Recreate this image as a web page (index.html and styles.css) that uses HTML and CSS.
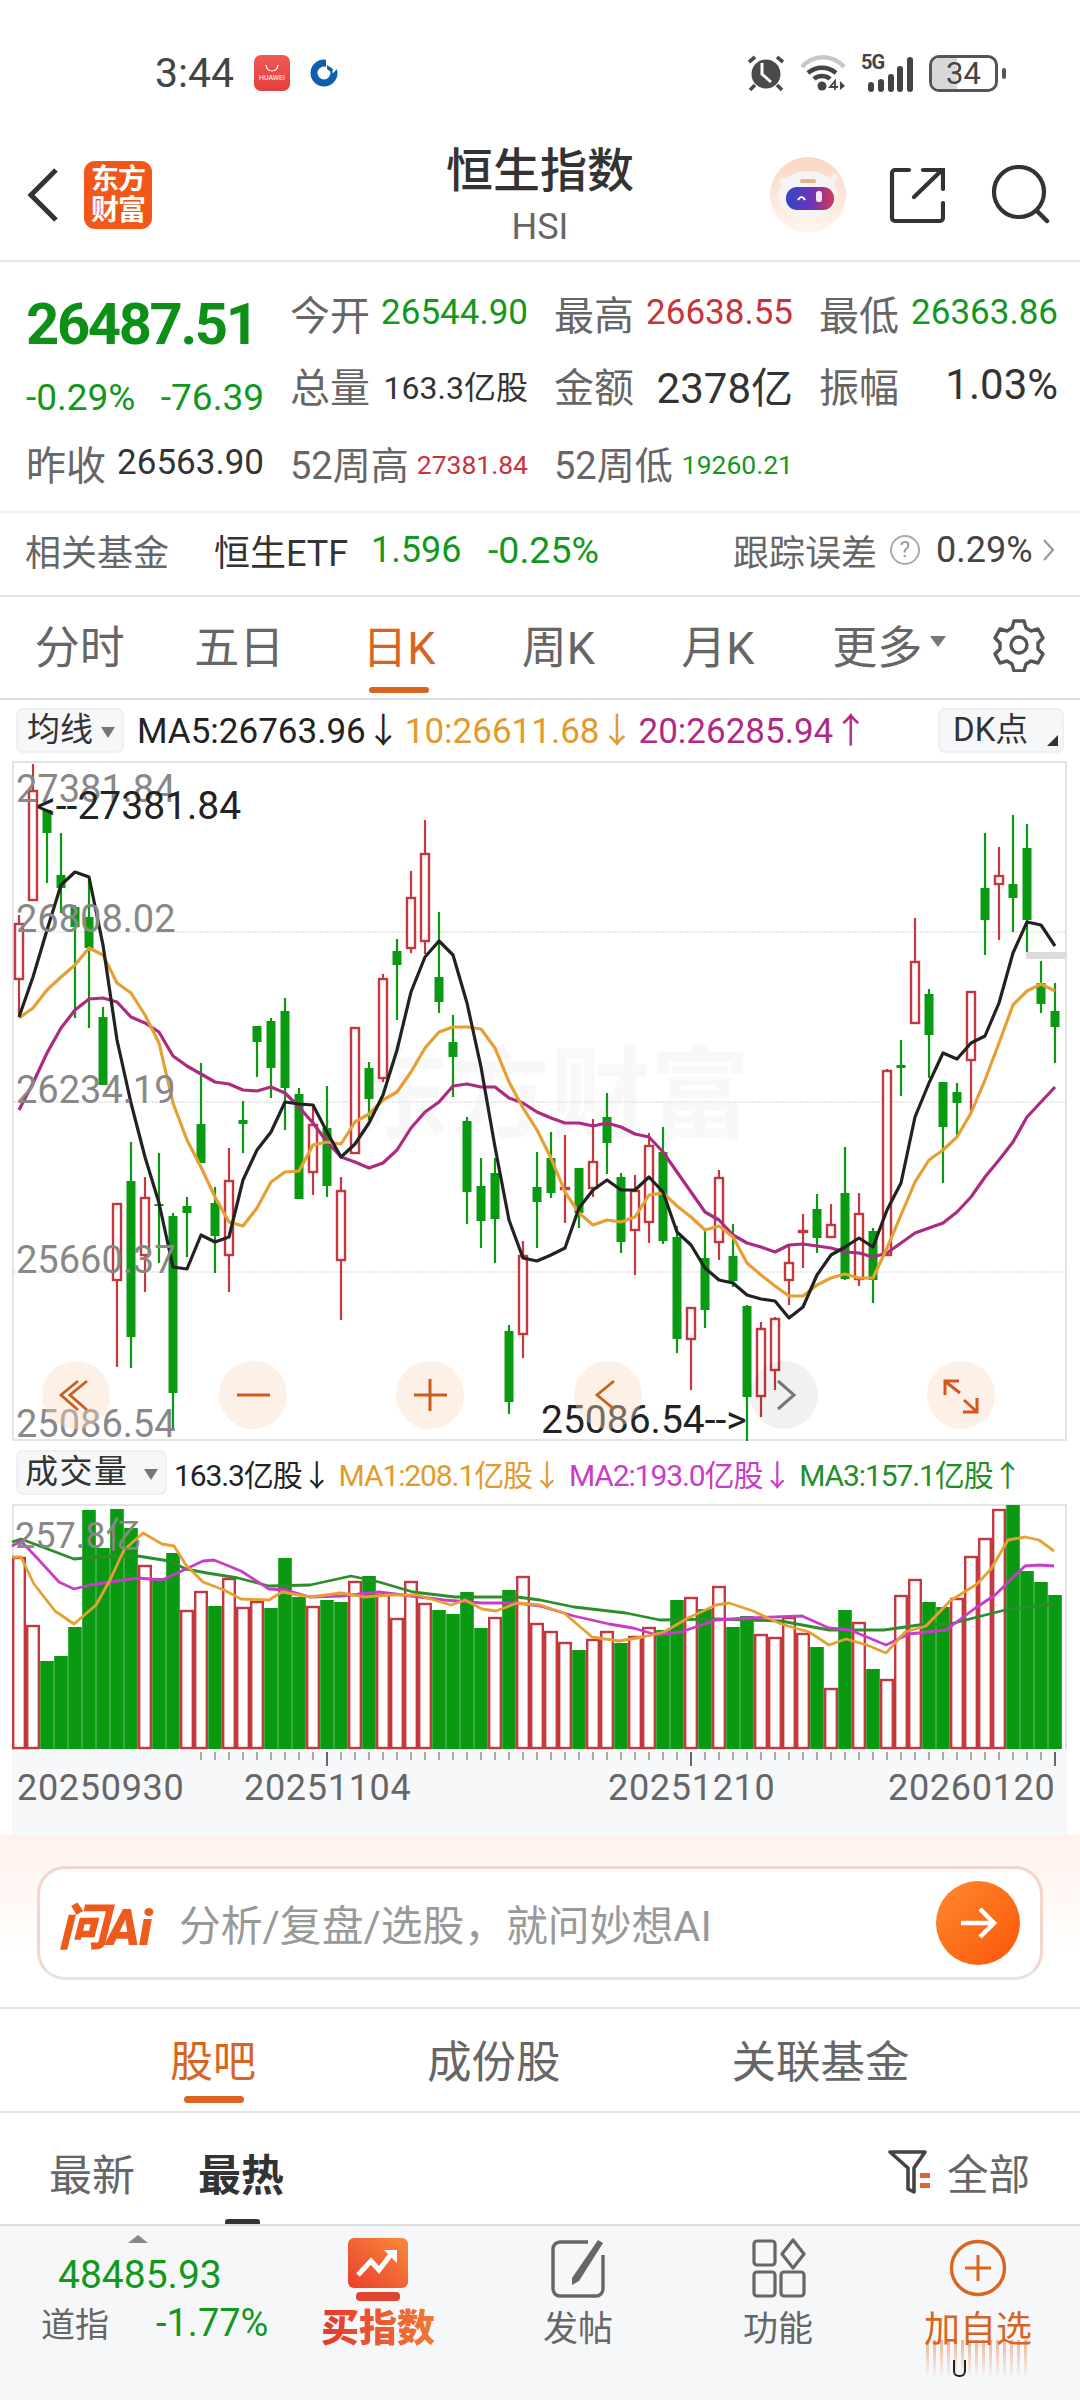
FILE: index.html
```html
<!DOCTYPE html>
<html lang="zh-CN">
<head>
    <meta charset="UTF-8">
    <meta name="viewport" content="width=device-width, initial-scale=1.0">
    <title>恒生指数</title>
    <link rel="stylesheet" href="styles.css">
</head>
<body>
    <div class="page">

        <!-- status bar -->
        <div class="status-bar">
            <div class="status-left">
                <span class="status-time">3:44</span>
                <div class="huawei-icon"><svg width="20" height="10" viewBox="0 0 20 10"><path d="M4 1c1 8 11 8 12 0" fill="none" stroke="#fff" stroke-width="1.2"/></svg><span>HUAWEI</span></div>
                <svg class="ccb-icon" width="28" height="28" viewBox="0 0 28 28"><circle cx="14" cy="14" r="10" fill="none" stroke="#0d5fb0" stroke-width="7"/><path d="M14 9l5 5-5 5-5-5z" fill="#fff"/><path d="M16 0h12v9l-5 5-5-5h-2z" fill="#fff"/><path d="M17 6l6 4-1 4-5-4z" fill="#0d5fb0"/></svg>
            </div>
            <div class="status-right">
                <svg width="38" height="38" viewBox="0 0 38 38"><circle cx="18" cy="20" r="14.5" fill="#4a4a4a"/><path d="M14 9v11l9 8" fill="none" stroke="#fff" stroke-width="3"/><path d="M1 8l6-5M35 8l-6-5" stroke="#4a4a4a" stroke-width="3.6" fill="none"/><path d="M7 31l-5 5M29 31l5 5" stroke="#4a4a4a" stroke-width="3.6" fill="none"/></svg>
                <svg class="wifi-icon" width="46" height="38" viewBox="0 0 46 38"><path d="M2 13C13 0 33 0 44 13" fill="none" stroke="#c8c8c8" stroke-width="4.5"/><path d="M8 19c8-7 20-7 28 0" fill="none" stroke="#444" stroke-width="4.5"/><path d="M14 25c4-4 12-4 16 0" fill="none" stroke="#444" stroke-width="4.5"/><circle cx="22" cy="32" r="4.5" fill="#444"/><path d="M35 36v-9l-5 6h8" fill="none" stroke="#444" stroke-width="1.8"/><path d="M40 27l5 5-5 4z" fill="#444"/></svg>
                <div class="signal">
                    <span class="signal-tag">5G</span>
                    <div class="signal-bars"><i class="bar1"></i><i class="bar2"></i><i class="bar3"></i><i class="bar4"></i><i class="bar5"></i></div>
                </div>
                <div class="battery"><div class="battery-fill"></div><span>34</span></div>
                <div class="battery-cap"></div>
            </div>
        </div>

        <!-- title bar -->
        <div class="nav-bar">
            <div class="nav-left">
                <svg width="34" height="56" viewBox="0 0 34 56"><path d="M30 3L5 28l25 25" fill="none" stroke="#333" stroke-width="5"/></svg>
                <div class="app-logo">东方<br>财富</div>
            </div>
            <div class="nav-title">
                <div class="title-main">恒生指数</div>
                <div class="title-sub">HSI</div>
            </div>
            <div class="nav-right">
                <svg class="robot" width="76" height="76" viewBox="0 0 76 76">
                    <defs>
                        <linearGradient id="visor" x1="0" x2="1" y1="0" y2="0"><stop offset="0" stop-color="#3445c9"/><stop offset=".55" stop-color="#6d35b5"/><stop offset="1" stop-color="#d8384f"/></linearGradient>
                        <linearGradient id="halo" x1="0" x2="0" y1="0" y2="1"><stop offset="0" stop-color="#fbd6bf"/><stop offset="1" stop-color="#fff6f0"/></linearGradient>
                    </defs>
                    <circle cx="38" cy="38" r="38" fill="url(#halo)"/>
                    <path d="M11 22l5 6M66 17l-4 8" stroke="#f4f2f2" stroke-width="6"/>
                    <ellipse cx="38" cy="38" rx="30" ry="24" fill="#f5f3f4"/>
                    <rect x="30" y="22" width="16" height="4" rx="2" fill="#e2b48f"/>
                    <rect x="16" y="30" width="48" height="23" rx="11" fill="url(#visor)"/>
                    <path d="M28 43q3.500-6 7 0" fill="none" stroke="#fff" stroke-width="2.2"/>
                    <rect x="46" y="34" width="6" height="11" rx="2.500" fill="#f6e6ef"/>
                </svg>
                <svg width="58" height="58" viewBox="0 0 58 58"><path d="M22 4H8a3 3 0 0 0-3 3v45a3 3 0 0 0 3 3h45a3 3 0 0 0 3-3V37" fill="none" stroke="#333" stroke-width="4.200" stroke-linecap="round"/><path d="M27 31L55 4" fill="none" stroke="#333" stroke-width="4.200" stroke-linecap="round"/><path d="M36 4h20v19" fill="none" stroke="#333" stroke-width="4.200" stroke-linecap="round"/></svg>
                <svg width="60" height="60" viewBox="0 0 60 60"><circle cx="29" cy="27" r="25" fill="none" stroke="#333" stroke-width="4.200"/><path d="M47 46l10 10" fill="none" stroke="#333" stroke-width="4.500" stroke-linecap="round"/></svg>
            </div>
        </div>

        <!-- quote block -->
        <div class="quote-grid">
            <div class="price-big">26487.51</div>
            <div class="q-cell"><span class="q-label">今开</span><span class="q-val green">26544.90</span></div>
            <div class="q-cell"><span class="q-label">最高</span><span class="q-val red">26638.55</span></div>
            <div class="q-cell"><span class="q-label">最低</span><span class="q-val green">26363.86</span></div>

            <div class="q-cell change"><span class="green">-0.29%</span><span class="green">-76.39</span></div>
            <div class="q-cell raised"><span class="q-label">总量</span><span class="q-val small dark">163.3亿股</span></div>
            <div class="q-cell raised"><span class="q-label">金额</span><span class="q-val large dark">2378亿</span></div>
            <div class="q-cell raised"><span class="q-label">振幅</span><span class="q-val large dark">1.03%</span></div>

            <div class="q-cell"><span class="q-label">昨收</span><span class="q-val dark">26563.90</span></div>
            <div class="q-cell"><span class="q-label narrow">52周高</span><span class="q-val tiny red">27381.84</span></div>
            <div class="q-cell"><span class="q-label narrow">52周低</span><span class="q-val tiny green">19260.21</span></div>
        </div>

        <!-- related fund -->
        <div class="fund-row">
            <span class="fund-title">相关基金</span>
            <span class="fund-name">恒生ETF</span>
            <span class="fund-price green">1.596</span>
            <span class="fund-pct green">-0.25%</span>
            <span class="fund-track">跟踪误差</span>
            <span class="help-dot">?</span>
            <span class="fund-err">0.29%</span>
            <svg width="14" height="24" viewBox="0 0 14 24"><path d="M2 2l9 10-9 10" fill="none" stroke="#999" stroke-width="2.2"/></svg>
        </div>

        <!-- period tabs -->
        <div class="period-tabs">
            <div class="period">分时</div>
            <div class="period">五日</div>
            <div class="period active">日K</div>
            <div class="period">周K</div>
            <div class="period">月K</div>
            <div class="period">更多<i class="more-caret"></i></div>
            <svg class="gear" width="54" height="54" viewBox="0 0 54 54"><path d="M22 3h10l2 7 5 3 7-2 5 9-5 5v6l5 5-5 9-7-2-5 3-2 7H22l-2-7-5-3-7 2-5-9 5-5v-6l-5-5 5-9 7 2 5-3z" fill="none" stroke="#555" stroke-width="3.4" stroke-linejoin="round"/><circle cx="27" cy="27" r="8" fill="none" stroke="#555" stroke-width="3.4"/></svg>
        </div>

        <!-- MA legend -->
        <div class="legend-row">
            <div class="chip">均线<i class="chip-caret"></i></div>
            <span class="ma-text black">MA5:26763.96↓</span>
            <span class="ma-text orange">10:26611.68↓</span>
            <span class="ma-text magenta">20:26285.94↑</span>
            <div class="chip chip-dk">DK点<i class="corner-mark"></i></div>
        </div>

        <svg id="klineChart" class="chart" width="1080" height="682" viewBox="0 760 1080 682"></svg>

        <!-- volume legend -->
        <div class="legend-row vol-legend">
            <div class="chip chip-vol">成交量<i class="chip-caret"></i></div>
            <span class="vol-text black">163.3亿股↓</span>
            <span class="vol-text orange">MA1:208.1亿股↓</span>
            <span class="vol-text purple">MA2:193.0亿股↓</span>
            <span class="vol-text dgreen">MA3:157.1亿股↑</span>
        </div>

        <svg id="volumeChart" class="chart" width="1080" height="332" viewBox="0 1503 1080 332"></svg>

        <!-- ask AI -->
        <div class="ai-section">
            <div class="ai-box">
                <span class="ai-logo">问Ai</span>
                <span class="ai-hint">分析/复盘/选股，就问妙想AI</span>
                <div class="ai-go"><svg width="40" height="40" viewBox="0 0 40 40"><path d="M3 20h32M22 6l14 14-14 14" fill="none" stroke="#fff" stroke-width="4.5"/></svg></div>
            </div>
        </div>

        <!-- forum tabs -->
        <div class="forum-tabs">
            <div class="forum-tab active">股吧</div>
            <div class="forum-tab">成份股</div>
            <div class="forum-tab">关联基金</div>
        </div>

        <div class="sort-row">
            <span class="sort-item">最新</span>
            <span class="sort-item current">最热</span>
            <div class="sort-filter">
                <svg width="46" height="46" viewBox="0 0 46 46"><path d="M3 3h35l-11 16v24l-6-3V19z" fill="none" stroke="#444" stroke-width="3.6" stroke-linejoin="round"/><rect x="33" y="24" width="10" height="5" fill="#e0672a"/><rect x="33" y="34" width="10" height="5" fill="#e0672a"/></svg>
                <span>全部</span>
            </div>
        </div>

        <!-- bottom bar -->
        <div class="bottom-bar">
            <div class="index-box">
                <i class="index-caret"></i>
                <div class="index-value">48485.93</div>
                <div class="index-line"><span class="index-name">道指</span><span class="index-pct">-1.77%</span></div>
            </div>
            <div class="bar-item buy">
                <svg width="62" height="64" viewBox="0 0 62 64"><defs><linearGradient id="buyFill" x1="0" x2="1" y1="1" y2="0"><stop offset="0" stop-color="#ea3f2e"/><stop offset="1" stop-color="#f98a3a"/></linearGradient></defs><rect x="1" y="0" width="60" height="50" rx="6" fill="url(#buyFill)"/><rect x="9" y="54" width="44" height="9" rx="4" fill="#e2452f"/><path d="M11 37l13-14 8 9 13-17" fill="none" stroke="#fff" stroke-width="5"/><path d="M37 12h13v13z" fill="#fff"/></svg>
                <span class="bar-label">买指数</span>
            </div>
            <div class="bar-item">
                <svg width="60" height="60" viewBox="0 0 60 60"><path d="M40 4H12a7 7 0 0 0-7 7v40a7 7 0 0 0 7 7h36a7 7 0 0 0 7-7V17" fill="none" stroke="#666" stroke-width="3.4"/><path d="M24 40L50 2l5 3-24 38-7 4z" fill="#666"/></svg>
                <span class="bar-label">发帖</span>
            </div>
            <div class="bar-item">
                <svg width="60" height="60" viewBox="0 0 60 60"><rect x="6" y="3" width="21" height="24" rx="3" fill="none" stroke="#666" stroke-width="3.2"/><path d="M45 2l11 14-11 14-11-14z" fill="none" stroke="#666" stroke-width="3.2" stroke-linejoin="round"/><rect x="6" y="34" width="21" height="24" rx="3" fill="none" stroke="#666" stroke-width="3.2"/><rect x="33" y="34" width="23" height="24" rx="3" fill="none" stroke="#666" stroke-width="3.2"/></svg>
                <span class="bar-label">功能</span>
            </div>
            <div class="bar-item add">
                <svg width="60" height="60" viewBox="0 0 60 60"><circle cx="30" cy="30" r="26.5" fill="none" stroke="#d9651f" stroke-width="3.4"/><path d="M17 30h26M30 17v26" fill="none" stroke="#d9651f" stroke-width="3"/></svg>
                <span class="bar-label">加自选</span>
                <div class="mark-fade"></div>
                <div class="mark-u"></div>
            </div>
        </div>
    </div>

    <script src="chart.js"></script>
</body>
</html>
```
FILE: styles.css
```css
* {
    box-sizing: border-box;
}

html, body {
    margin: 0;
    background-color: #fff;
}

body {
    font-family: Roboto, "Noto Sans CJK SC", sans-serif;
    color: #333;
}

.page {
    width: 1080px;
    height: 2400px;
    overflow: hidden;
    display: flex;
    flex-direction: column;
}

.green { color: #12981c; }
.red { color: #c8333b; }
.dark { color: #333; }
.black { color: #222; }
.orange { color: #e39a2d; }
.magenta { color: #b02a84; }
.purple { color: #c93cc9; }
.dgreen { color: #1f8f2a; }

/* status bar */
.status-bar {
    height: 130px;
    flex-shrink: 0;
    padding: 16px 74px 0 155px;
    display: flex;
    align-items: center;
    justify-content: space-between;
}

.status-left, .status-right {
    display: flex;
    align-items: center;
}

.status-time {
    font-size: 41px;
    color: #444;
    width: 99px;
}

.huawei-icon {
    width: 36px;
    height: 36px;
    border-radius: 7px;
    background: linear-gradient(#ee5a55, #e53e3e);
    display: flex;
    flex-direction: column;
    align-items: center;
    justify-content: center;
    color: #fff;
    font-size: 7px;
    line-height: 9px;
}

.ccb-icon {
    margin-left: 20px;
}

.wifi-icon {
    margin-left: 14px;
}

.signal {
    margin-left: 15px;
    width: 52px;
    height: 38px;
    position: relative;
}

.signal-tag {
    position: absolute;
    left: 0;
    top: -4px;
    font-size: 20px;
    font-weight: 700;
    letter-spacing: -1px;
    color: #444;
}

.signal-bars {
    position: absolute;
    left: 7px;
    right: 0;
    bottom: 0;
    display: flex;
    align-items: flex-end;
    justify-content: space-between;
}

.signal-bars i {
    display: block;
    width: 6px;
    background-color: #444;
    border-radius: 3px;
}

.bar1 { height: 10px; }
.bar2 { height: 13px; }
.bar3 { height: 18px; }
.bar4 { height: 26px; }
.bar5 { height: 35px; }

.battery {
    margin-left: 16px;
    width: 69px;
    height: 37px;
    border: 3px solid #555;
    border-radius: 10px;
    position: relative;
    overflow: hidden;
    text-align: center;
    font-size: 31px;
    line-height: 31px;
    color: #444;
}

.battery-fill {
    position: absolute;
    left: 0;
    top: 0;
    bottom: 0;
    width: 40%;
    background-color: #d8d8d8;
}

.battery span {
    position: relative;
}

.battery-cap {
    width: 4px;
    height: 11px;
    margin-left: 4px;
    background-color: #555;
    border-radius: 2px;
}

/* title bar */
.nav-bar {
    height: 132px;
    flex-shrink: 0;
    border-bottom: 2px solid #e5e5e5;
    display: grid;
    grid-template-columns: 1fr auto 1fr;
    align-items: center;
}

.nav-left {
    display: flex;
    align-items: center;
    padding-left: 26px;
    gap: 24px;
}

.app-logo {
    width: 68px;
    height: 68px;
    border-radius: 11px;
    background-color: #f2571a;
    color: #fff;
    font-size: 28px;
    line-height: 31px;
    font-weight: 700;
    text-align: center;
    padding-top: 3px;
    letter-spacing: -1px;
}

.nav-title {
    text-align: center;
    margin-top: -2px;
}

.title-main {
    font-size: 47px;
    line-height: 60px;
    font-weight: 500;
    color: #333;
}

.title-sub {
    font-size: 36px;
    line-height: 42px;
    margin-top: 5px;
    color: #666;
}

.nav-right {
    display: flex;
    align-items: center;
    justify-content: flex-end;
    padding-right: 30px;
}

.robot {
    margin-right: 41px;
}

.nav-right svg:last-child {
    margin-left: 45px;
}

/* quote block */
.quote-grid {
    height: 251px;
    flex-shrink: 0;
    border-bottom: 2px solid #eee;
    padding: 13px 24px 0 26px;
    display: grid;
    grid-template-columns: 238px 238px 239px 239px;
    grid-auto-rows: 75px;
    column-gap: 26px;
}

.price-big {
    font-size: 58px;
    font-weight: 700;
    letter-spacing: -2.4px;
    color: #0e8f18;
    line-height: 75px;
    padding-top: 12px;
    white-space: nowrap;
}

.q-cell {
    display: flex;
    align-items: center;
    justify-content: space-between;
    white-space: nowrap;
}

.q-cell.raised {
    padding-bottom: 6px;
}

.change {
    font-size: 37px;
    padding-top: 20px;
}

.q-label {
    font-size: 40px;
    color: #666;
}

.q-label.narrow {
    font-size: 38px;
}

.q-val {
    font-size: 35px;
}

.q-val.small { font-size: 32px; }
.q-val.large { font-size: 42px; }
.q-val.tiny { font-size: 26.5px; padding-top: 4px; }

/* related fund */
.fund-row {
    height: 84px;
    flex-shrink: 0;
    border-bottom: 2px solid #e5e5e5;
    display: flex;
    align-items: center;
    padding: 0 0 8px 25px;
    font-size: 36px;
    white-space: nowrap;
}

.fund-title {
    color: #666;
    width: 189px;
}

.fund-name {
    color: #333;
    width: 157px;
}

.fund-price {
    width: 117px;
}

.fund-pct {
    width: 245px;
    font-size: 37.5px;
}

.fund-track {
    color: #666;
    width: 157px;
}

.help-dot {
    width: 30px;
    height: 30px;
    border: 2px solid #aaa;
    border-radius: 50%;
    color: #999;
    font-size: 22px;
    line-height: 26px;
    text-align: center;
    margin-right: 16px;
}

.fund-err {
    color: #444;
    width: 106px;
}

/* period tabs */
.period-tabs {
    height: 103px;
    flex-shrink: 0;
    border-bottom: 2px solid #ddd;
    display: grid;
    grid-template-columns: repeat(6, 159.5px) 1fr;
    align-items: center;
    padding-bottom: 6px;
}

.period {
    font-size: 45px;
    color: #666;
    text-align: center;
    position: relative;
    white-space: nowrap;
}

.period.active {
    color: #d8641f;
}

.period.active::after {
    content: "";
    position: absolute;
    left: 50px;
    width: 60px;
    height: 6px;
    bottom: -16px;
    border-radius: 3px;
    background-color: #d8641f;
}

.more-caret {
    position: absolute;
    margin: 24px 0 0 8px;
    border-left: 8px solid transparent;
    border-right: 8px solid transparent;
    border-top: 11px solid #777;
}

.gear {
    justify-self: center;
    margin-left: 0;
}

/* legends */
.legend-row {
    height: 60px;
    flex-shrink: 0;
    display: flex;
    align-items: center;
    padding-left: 16px;
    white-space: nowrap;
}

.chip {
    height: 45px;
    width: 108px;
    border: 2px solid #eef0f3;
    border-radius: 7px;
    background-color: #f6f7f9;
    font-size: 33px;
    line-height: 40px;
    color: #333;
    padding-left: 9px;
    position: relative;
    flex-shrink: 0;
    margin-right: 13px;
}

.chip-caret {
    position: absolute;
    right: 7px;
    top: 17px;
    border-left: 7px solid transparent;
    border-right: 7px solid transparent;
    border-top: 11px solid #777;
}

.chip-dk {
    width: 126px;
    margin: 0 16px 0 auto;
    padding-left: 13px;
}

.corner-mark {
    position: absolute;
    right: 4px;
    bottom: 5px;
    border-left: 11px solid transparent;
    border-bottom: 11px solid #333;
}

.ma-text {
    font-size: 35px;
    margin: 0 4px 5px 0;
}

.vol-legend {
    height: 61px;
}

.chip-vol {
    width: 151px;
    margin-right: 7px;
    padding-left: 7px;
    letter-spacing: 1.5px;
}

.vol-text {
    font-size: 30px;
    letter-spacing: -1.1px;
    margin-right: 8px;
}

.chart {
    display: block;
    flex-shrink: 0;
    overflow: visible;
}

.axis-label {
    font-size: 38px;
    fill: #888;
}

.vol-label {
    font-size: 36px;
    fill: #888;
}

.mark-label {
    font-size: 39px;
    fill: #222;
}

.date-label {
    font-size: 36px;
    letter-spacing: 0.7px;
    fill: #666;
}

.watermark {
    font-size: 100px;
    font-weight: 700;
    fill: #f8f8f8;
}

/* ask AI */
.ai-section {
    height: 174px;
    flex-shrink: 0;
    border-bottom: 2px solid #e5e5e5;
    background: linear-gradient(#fff2ec, #fff 70%);
    padding: 31px 37px 0;
}

.ai-box {
    height: 114px;
    border-radius: 28px;
    border: 3px solid #f3d5cb;
    border-bottom-color: #dfe3ea;
    background-color: #fff;
    display: flex;
    align-items: center;
    padding: 0 20px;
}

.ai-logo {
    font-size: 50px;
    font-weight: 900;
    font-style: italic;
    color: #ee5a1c;
    width: 121px;
    letter-spacing: -1px;
    margin-left: -2px;
}

.ai-hint {
    font-size: 41.8px;
    color: #999;
    flex: 1;
    white-space: nowrap;
}

.ai-go {
    width: 84px;
    height: 84px;
    border-radius: 50%;
    background: linear-gradient(135deg, #ff8a2e, #fb5507);
    display: flex;
    align-items: center;
    justify-content: center;
}

/* forum tabs */
.forum-tabs {
    height: 104px;
    flex-shrink: 0;
    border-bottom: 2px solid #e5e5e5;
    display: flex;
    align-items: center;
    padding: 0 0 0 170px;
    gap: 171px;
}

.forum-tab {
    font-size: 44.5px;
    color: #666;
    position: relative;
    white-space: nowrap;
    margin-top: -4px;
}

.forum-tab.active {
    color: #d8641f;
    font-size: 43px;
}

.forum-tab.active::after {
    content: "";
    position: absolute;
    left: 14px;
    width: 60px;
    height: 7px;
    bottom: -14px;
    border-radius: 4px;
    background-color: #d8641f;
}

.sort-row {
    height: 111px;
    flex-shrink: 0;
    display: flex;
    align-items: center;
    padding: 6px 50px 0 49px;
    overflow: hidden;
}

.sort-item {
    font-size: 43px;
    color: #666;
    margin-right: 63px;
}

.sort-item.current {
    font-weight: 700;
    color: #333;
    position: relative;
}

.sort-item.current::after {
    content: "";
    position: absolute;
    left: 27px;
    width: 35px;
    height: 8px;
    bottom: -24px;
    border-radius: 3px 3px 0 0;
    background-color: #333;
}

.sort-filter {
    margin-left: auto;
    display: flex;
    align-items: center;
    gap: 14px;
    font-size: 41.5px;
    color: #666;
}

/* bottom bar */
.bottom-bar {
    flex: 1;
    border-top: 2px solid #ddd;
    background-color: #f6f7f9;
    display: flex;
}

.index-box {
    width: 278px;
    position: relative;
    padding: 26px 0 0 41px;
    white-space: nowrap;
}

.index-caret {
    position: absolute;
    left: 128px;
    top: 9px;
    border-left: 10px solid transparent;
    border-right: 10px solid transparent;
    border-bottom: 8px solid #888;
}

.index-value {
    font-size: 39px;
    line-height: 46px;
    margin-left: 17px;
    color: #12981c;
}

.index-line {
    display: flex;
    align-items: center;
    margin-top: 0;
}

.index-name {
    font-size: 34px;
    color: #666;
    width: 115px;
}

.index-pct {
    font-size: 38px;
    color: #12981c;
}

.bar-item {
    width: 200px;
    padding-top: 12px;
    display: flex;
    flex-direction: column;
    align-items: center;
    position: relative;
}

.bar-label {
    font-size: 35px;
    line-height: 46px;
    color: #666;
    margin-top: 9px;
}

.buy .bar-label {
    font-weight: 900;
    font-size: 38px;
    margin-top: 3px;
    background: linear-gradient(90deg, #e8352c, #f07a35);
    -webkit-background-clip: text;
    background-clip: text;
    color: transparent;
}

.add .bar-label {
    color: #d8641f;
    font-size: 36px;
}

.mark-fade {
    position: absolute;
    left: 48px;
    width: 104px;
    top: 114px;
    height: 38px;
    background: repeating-linear-gradient(90deg, rgba(216, 100, 31, 0.45) 0 3px, transparent 3px 7px);
    -webkit-mask-image: linear-gradient(#000, transparent);
    mask-image: linear-gradient(#000, transparent);
}

.mark-u {
    position: absolute;
    left: 75px;
    top: 134px;
    width: 13px;
    height: 17px;
    border: 2px solid #222;
    border-top: none;
    border-radius: 0 0 6px 6px;
}
```
FILE: chart.js
```js
const NS = 'http://www.w3.org/2000/svg';
const RED = '#c4393f';
const GREEN = '#0a9a12';

function add(svg, tag, attrs, text) {
    const el = document.createElementNS(NS, tag);
    for (const k in attrs) el.setAttribute(k, attrs[k]);
    if (text) el.textContent = text;
    svg.appendChild(el);
    return el;
}

function polyline(svg, pts, color, width) {
    add(svg, 'polyline', {
        points: pts.map(p => p.join(',')).join(' '),
        fill: 'none', stroke: color, 'stroke-width': width, 'stroke-linejoin': 'round'
    });
}

const cx = i => 19 + i * 14;

// high, body top, body bottom, low, 1 = up day (hollow red)
const candles = [
    [915,924,979,1014,1],[764,791,900,900,1],[809,810,833,883,0],[833,875,888,913,0],[905,907,927,1018,0],
    [880,917,948,1028,0],[1007,1017,1085,1085,0],[1204,1204,1280,1367,1],[1142,1181,1337,1368,0],[1177,1198,1255,1292,1],
    [1153,1204,1205,1263,0],[1213,1216,1393,1428,0],[1197,1206,1213,1257,0],[1063,1124,1163,1163,0],[1187,1203,1236,1273,0],
    [1148,1181,1255,1292,1],[1101,1120,1124,1153,0],[1026,1026,1042,1077,0],[1018,1021,1068,1098,0],[998,1011,1088,1130,0],
    [1088,1094,1199,1199,0],[1107,1125,1172,1195,1],[1086,1128,1186,1197,0],[1177,1191,1260,1320,1],[1028,1028,1153,1153,1],
    [1062,1068,1099,1120,0],[974,979,1078,1082,1],[939,951,965,1020,0],[871,898,948,953,1],[820,854,941,954,1],
    [912,977,1002,1013,0],[1015,1042,1057,1097,0],[1117,1121,1192,1224,0],[1158,1186,1221,1248,0],[1158,1173,1219,1263,0],
    [1325,1331,1402,1414,0],[1241,1256,1334,1358,1],[1152,1187,1202,1248,0],[1132,1158,1193,1198,0],[1135,1188,1189,1223,1],
    [1168,1168,1213,1228,0],[1119,1162,1188,1197,1],[1093,1117,1143,1174,0],[1173,1177,1242,1253,0],[1175,1191,1230,1275,1],
    [1133,1146,1222,1243,1],[1127,1152,1241,1244,0],[1226,1237,1339,1353,0],[1307,1308,1339,1390,1],[1230,1258,1310,1328,0],
    [1170,1178,1242,1260,1],[1224,1256,1281,1287,0],[1305,1306,1397,1441,0],[1322,1329,1396,1417,1],[1317,1319,1370,1390,1],
    [1245,1263,1280,1305,1],[1214,1231,1232,1268,1],[1194,1209,1238,1253,0],[1204,1225,1237,1237,1],[1147,1193,1279,1280,0],
    [1193,1214,1279,1286,1],[1228,1231,1280,1303,0],[1069,1071,1255,1255,1],[1040,1065,1068,1096,0],[918,962,1023,1023,1],
    [989,994,1035,1078,0],[1082,1082,1127,1183,0],[1083,1092,1103,1135,0],[992,992,1060,1113,1],[833,888,920,955,0],
    [847,876,884,940,1],[815,884,898,932,0],[824,848,920,952,0],[961,983,1004,1013,0],[983,1011,1027,1063,0]
];

const ma5 = [1017,977,930,885,872,877,945,1040,1103,1157,1203,1267,1269,1235,1242,1237,1180,1150,1132,1102,1104,1105,1132,1157,1144,
    1123,1095,1050,992,957,941,955,1003,1067,1147,1220,1258,1261,1255,1248,1208,1190,1180,1190,1190,1177,1192,1232,1245,1268,
    1280,1283,1295,1299,1301,1318,1307,1275,1255,1247,1238,1247,1210,1183,1117,1083,1053,1059,1043,1036,1003,953,922,925,946];
const ma10 = [1018,1008,990,977,965,948,955,983,993,1015,1043,1103,1140,1167,1197,1222,1226,1208,1182,1172,1171,1145,1142,1144,1122,
    1114,1100,1092,1072,1048,1032,1027,1027,1029,1048,1082,1108,1130,1158,1192,1213,1225,1220,1222,1217,1195,1193,1206,1217,1230,
    1226,1237,1263,1275,1286,1296,1296,1285,1278,1274,1278,1278,1248,1215,1182,1160,1150,1137,1113,1080,1043,1005,991,984,991];
const ma20 = [1110,1083,1053,1028,1010,999,998,1002,1017,1023,1032,1056,1066,1074,1082,1084,1090,1091,1087,1093,1107,1123,1142,1157,1162,
    1168,1163,1150,1128,1112,1102,1086,1084,1087,1087,1098,1103,1112,1118,1123,1123,1126,1123,1127,1134,1137,1152,1172,1192,1212,
    1220,1235,1243,1247,1252,1245,1244,1246,1248,1252,1253,1257,1253,1243,1233,1228,1223,1212,1197,1177,1160,1142,1117,1102,1087];

// top of each volume bar
const volTops = [1558,1626,1661,1656,1627,1510,1548,1509,1528,1566,1578,1553,1611,1592,1606,1579,1608,1602,1608,1558,1597,1607,1600,1602,1582,
    1576,1595,1619,1582,1604,1610,1614,1592,1628,1618,1590,1577,1624,1632,1643,1650,1640,1632,1643,1637,1628,1630,1600,1598,1609,
    1587,1627,1616,1635,1638,1618,1634,1647,1689,1610,1623,1669,1680,1596,1580,1602,1607,1599,1557,1539,1510,1505,1571,1582,1595];
const volUp = new Set([0,1,9,12,13,15,16,17,21,24,26,27,28,29,34,36,37,38,39,41,42,44,45,48,50,53,54,55,56,58,60,62,63,64,67,68,69,70]);

function drawKline() {
    const svg = document.getElementById('klineChart');
    add(svg, 'rect', { x: 13, y: 762, width: 1053, height: 678, fill: '#fff', stroke: '#e4e4e4', 'stroke-width': 2 });

    add(svg, 'text', { x: 350, y: 1130, class: 'watermark' }, '东方财富');

    [932, 1102, 1272].forEach(y => add(svg, 'line', {
        x1: 14, x2: 1066, y1: y, y2: y, stroke: '#e3e3e3', 'stroke-width': 1.5, 'stroke-dasharray': '2 1'
    }));

    candles.forEach((c, i) => {
        const x = cx(i);
        const color = c[4] ? RED : GREEN;
        add(svg, 'line', { x1: x, x2: x, y1: c[0], y2: c[3], stroke: color, 'stroke-width': 2.2 });
        if (c[4]) {
            add(svg, 'rect', { x: x - 4, y: c[1], width: 8, height: Math.max(c[2] - c[1], 1), fill: '#fff', stroke: color, 'stroke-width': 2.4 });
        } else {
            add(svg, 'rect', { x: x - 4.5, y: c[1], width: 9, height: Math.max(c[2] - c[1], 2), fill: color });
        }
    });

    add(svg, 'rect', { x: 1026, y: 952, width: 40, height: 7, fill: '#dcdcdc' });

    polyline(svg, ma20.map((y, i) => [cx(i), y]), '#ad2a83', 3.2);
    polyline(svg, ma10.map((y, i) => [cx(i), y]), '#e6a032', 3.2);
    polyline(svg, ma5.map((y, i) => [cx(i), y]), '#222', 3.2);

    [['27381.84', 802], ['26808.02', 932], ['26234.19', 1103], ['25660.37', 1273], ['25086.54', 1437]].forEach(l => {
        add(svg, 'text', { x: 16, y: l[1], class: 'axis-label' }, l[0]);
    });
    add(svg, 'text', { x: 36, y: 819, class: 'mark-label' }, '<--27381.84');
    add(svg, 'text', { x: 541, y: 1433, class: 'mark-label' }, '25086.54-->');

    // pan and zoom buttons
    [76, 253, 430, 608, 961].forEach(x => add(svg, 'circle', { cx: x, cy: 1395, r: 34, fill: '#f9d9c3', 'fill-opacity': 0.4 }));
    add(svg, 'circle', { cx: 784, cy: 1395, r: 34, fill: '#000', 'fill-opacity': 0.055 });

    const icon = (d, color, w) => add(svg, 'path', { d: d, fill: 'none', stroke: color, 'stroke-width': w });
    icon('M78 1381L61 1395 78 1410M87 1381L70 1395 87 1410', '#c85f1e', 2.8);
    icon('M237 1395H270', '#c85f1e', 3);
    icon('M414 1395H447M430 1379V1411', '#c85f1e', 3);
    icon('M614 1381L597 1395 614 1409', '#c85f1e', 2.8);
    icon('M778 1381L794 1395 778 1409', '#777', 3);
    icon('M945 1395V1381H959M946 1382L960 1393', '#d9541e', 3);
    icon('M977 1398V1412H963M976 1411L964 1400', '#d9541e', 3);
}

function drawVolume() {
    const svg = document.getElementById('volumeChart');
    add(svg, 'rect', { x: 13, y: 1505, width: 1053, height: 246, fill: '#fff', stroke: '#e4e4e4', 'stroke-width': 2 });
    add(svg, 'rect', { x: 12, y: 1750, width: 1055, height: 85, fill: '#f7f8fa' });

    volTops.forEach((top, i) => {
        const x = cx(i) - 5.8;
        if (volUp.has(i)) {
            add(svg, 'rect', { x: x, y: top, width: 11.6, height: 1748 - top, fill: '#fff', stroke: RED, 'stroke-width': 2.4 });
        } else {
            add(svg, 'rect', { x: x - 1, y: top, width: 13.6, height: 1749 - top, fill: GREEN });
        }
    });

    // points read in page coordinates
    const ma1 = [[12,1557],[21,1557],[34,1584],[55,1611],[74,1624],[96,1605],[110,1580],[124,1550],[143,1533],[162,1544],[174,1546],[186,1565],[203,1582],[224,1590],[241,1599],[269,1600],[282,1592],[310,1597],[341,1593],[365,1597],[389,1595],[417,1595],[451,1605],[465,1600],[482,1609],[496,1611],[517,1603],[540,1605],[564,1613],[592,1637],[619,1641],[643,1637],[664,1632],[688,1618],[716,1605],[729,1603],[753,1611],[781,1624],[809,1632],[829,1645],[846,1639],[867,1645],[886,1653],[905,1632],[926,1626],[950,1601],[977,1584],[991,1569],[1008,1540],[1025,1537],[1039,1540],[1054,1551]];
    const ma2 = [[12,1546],[21,1541],[38,1559],[59,1582],[74,1589],[90,1585],[110,1582],[138,1578],[162,1580],[186,1569],[203,1561],[214,1560],[241,1571],[269,1589],[286,1590],[310,1597],[341,1596],[379,1592],[403,1595],[444,1600],[482,1603],[517,1603],[540,1606],[574,1616],[609,1624],[633,1628],[657,1635],[681,1632],[716,1620],[747,1618],[802,1616],[829,1628],[850,1630],[886,1645],[909,1634],[946,1630],[974,1609],[995,1595],[1025,1566],[1039,1565],[1054,1566]];
    const ma3 = [[12,1542],[21,1539],[45,1548],[74,1559],[96,1557],[138,1556],[169,1561],[186,1569],[207,1573],[238,1578],[269,1586],[310,1585],[351,1576],[379,1582],[413,1592],[455,1597],[517,1597],[540,1600],[574,1607],[626,1613],[660,1620],[716,1619],[781,1621],[829,1630],[884,1630],[919,1625],[950,1624],[1005,1610],[1054,1604]];
    polyline(svg, ma3, '#2a8f2a', 2.8);
    polyline(svg, ma2, '#c93cc9', 2.8);
    polyline(svg, ma1, '#e6a032', 2.8);

    add(svg, 'text', { x: 15, y: 1548, class: 'vol-label' }, '257.8亿');

    for (let i = 0; i < 62; i++) {
        const x = 201 + i * 14;
        const major = i === 9 || i === 35 || i === 61;
        add(svg, 'line', { x1: x, x2: x, y1: 1752, y2: major ? 1766 : 1760, stroke: major ? '#666' : '#aaa', 'stroke-width': 2 });
    }

    [['20250930', 17], ['20251104', 244], ['20251210', 608], ['20260120', 888]].forEach(d => {
        add(svg, 'text', { x: d[1], y: 1800, class: 'date-label' }, d[0]);
    });
}

drawKline();
drawVolume();
```
